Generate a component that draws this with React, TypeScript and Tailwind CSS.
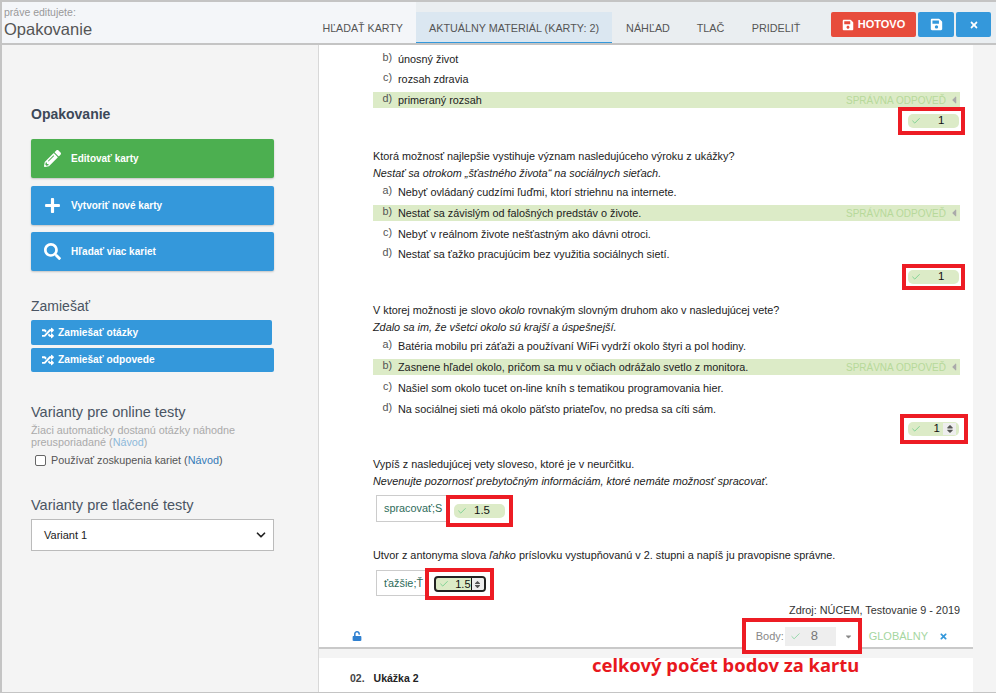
import { Check, ChevronDown } from 'lucide-react'
import { FaPencilAlt, FaPlus, FaSearch, FaRandom, FaSave, FaTimes, FaUnlock, FaCaretLeft, FaSort, FaCaretDown } from 'react-icons/fa'
import type { ReactNode } from 'react'

const TABS = ['HĽADAŤ KARTY', 'AKTUÁLNY MATERIÁL (KARTY: 2)', 'NÁHĽAD', 'TLAČ', 'PRIDELIŤ']

function Option({ letter, correct, children }: { letter: string; correct?: boolean; children: ReactNode }) {
  return (
    <div className={`flex items-center h-[16px] pl-[3px] ${correct ? 'bg-[#dcebc7]' : ''}`}>
      <span className="w-[16px] text-right text-[10.8px] text-[#555] -translate-y-[2px]">{letter}</span>
      <span className="ml-[6px] flex-1 text-[10.85px] text-[#222]">{children}</span>
      {correct && (
        <span className="flex items-center gap-[2px] text-[10px] text-[#b7d99a] whitespace-nowrap">
          SPRÁVNA ODPOVEĎ <FaCaretLeft className="text-[#aaa] text-[12px]" />
        </span>
      )}
    </div>
  )
}

// plain answer row, slightly taller than the highlighted one
function Row({ h, mt, letter, children }: { h: string; mt?: string; letter: string; children: ReactNode }) {
  return (
    <div className={`flex items-center ${h} ${mt ?? ''}`}>
      <div className="flex-1"><Option letter={letter}>{children}</Option></div>
    </div>
  )
}

function Score({ value, spin, ml }: { value: string; spin?: boolean; ml?: string }) {
  return (
    <div className="flex items-center h-[14px] w-[51px] rounded-[5px] bg-[#dcebc7] pl-[3px]">
      <Check className="w-[10px] h-[10px] text-[#6fce8c]" strokeWidth={2} />
      <span className={`text-[11.5px] text-[#111] ${spin ? 'ml-auto' : ml ?? 'ml-[17px]'}`}>{value}</span>
      {spin && (
        <span className="ml-[3px] mr-[3px] w-[13px] h-[12px] flex items-center justify-center bg-[#eee] text-[#555]">
          <FaSort className="text-[10px]" />
        </span>
      )}
    </div>
  )
}

function ScoreRow({ children, box }: { children: ReactNode; box: string }) {
  return (
    <div className="flex justify-end">
      <div className={`flex items-center justify-end border-[4px] border-[#ed1c24] ${box}`}>{children}</div>
    </div>
  )
}

function SideButton({ icon, label, className }: { icon: ReactNode; label: string; className?: string }) {
  return (
    <div className={`flex items-center h-[39px] w-[243px] rounded-[2px] shadow-[0_1px_2px_rgba(0,0,0,0.2)] text-white ${className ?? ''}`}>
      <span className="w-[40px] flex justify-center pl-[2px] text-[17px]">{icon}</span>
      <span className="text-[10px] font-bold">{label}</span>
    </div>
  )
}

function ShuffleButton({ label, w, h }: { label: string; w: string; h: string }) {
  return (
    <div className={`flex items-center ${w} ${h} rounded-[2px] bg-[#3498db] text-white pl-[11px] gap-[4px]`}>
      <FaRandom className="text-[12px]" />
      <span className="text-[10.2px] font-bold">{label}</span>
    </div>
  )
}

export default function App() {
  return (
    <div className="h-[693px] w-[996px] overflow-hidden flex flex-col bg-[#f4f4f4] border-t-[2px] border-l-[2px] border-[#c4c4c4] font-['Liberation_Sans',Arial,sans-serif]">
      {/* Top bar */}
      <div className="h-[43px] flex-shrink-0 flex bg-[#eaeef1] border-b-[2px] border-[#c4c4c4]">
        <div className="w-[414px] flex-shrink-0 bg-[#f4f6f9] flex">
          <div className="pl-[2px] pt-[3px]">
            <div className="text-[10.5px] leading-[14px] text-[#999]">práve editujete:</div>
            <div className="text-[16.5px] leading-[20px] text-[#555]">Opakovanie</div>
          </div>
          <div className="ml-auto pr-[13px] pt-[18px] text-[10.7px] text-[#555]">{TABS[0]}</div>
        </div>
        <div className="flex h-[41px] flex-1">
          <div className="mt-[10px] pt-[2px] h-[31px] w-[196px] flex items-center justify-center text-[10.8px] text-[#555] bg-[#dbe7f1] border-b-[1px] border-[#3498db]">
            {TABS[1]}
          </div>
          <div className="w-[72px] text-center pt-[18px] text-[10.8px] text-[#555]">{TABS[2]}</div>
          <div className="w-[53px] text-center pt-[18px] text-[10.8px] text-[#555]">{TABS[3]}</div>
          <div className="w-[78px] text-center pt-[18px] text-[10.8px] text-[#555]">{TABS[4]}</div>
          <div className="ml-[16px] mt-[10px] flex gap-[2px]">
            <div className="w-[85px] h-[25px] rounded-[2px] bg-[#e74c3c] text-white flex items-center justify-center gap-[4px]">
              <FaSave className="text-[12px]" />
              <span className="text-[11px] font-bold">HOTOVO</span>
            </div>
            <div className="w-[36px] h-[25px] rounded-[2px] bg-[#3498db] text-white flex items-center justify-center">
              <FaSave className="text-[13px]" />
            </div>
            <div className="w-[35px] h-[25px] rounded-[2px] bg-[#3498db] text-white flex items-center justify-center">
              <FaTimes className="text-[10px]" />
            </div>
          </div>
        </div>
      </div>

      <div className="flex flex-1 min-h-0">
        {/* Left panel */}
        <div className="w-[317px] flex-shrink-0 pl-[29px] pt-[61px] border-r-[1px] border-[#d8d8d8]">
          <div className="text-[14px] font-bold leading-[16px] text-[#3c4858]">Opakovanie</div>
          <SideButton className="mt-[17px] bg-[#4caf50]" icon={<FaPencilAlt />} label="Editovať karty" />
          <SideButton className="mt-[8px] bg-[#3498db]" icon={<FaPlus />} label="Vytvoriť nové karty" />
          <SideButton className="mt-[7px] bg-[#3498db]" icon={<FaSearch />} label="Hľadať viac kariet" />
          <div className="mt-[26px] text-[14px] leading-[18px] text-[#4a5563]">Zamiešať</div>
          <ShuffleButton label="Zamiešať otázky" w="w-[241px]" h="h-[25px] mt-[5px]" />
          <ShuffleButton label="Zamiešať odpovede" w="w-[243px]" h="h-[24px] mt-[3px]" />
          <div className="mt-[31px] text-[14.5px] leading-[18px] text-[#4a5563]">Varianty pre online testy</div>
          <div className="mt-[3px] text-[10.8px] leading-[12px] text-[#aaa] w-[230px]">
            Žiaci automaticky dostanú otázky náhodne preusporiadané (<span className="text-[#8db9da]">Návod</span>)
          </div>
          <label className="mt-[5px] flex items-center text-[10.8px] leading-[14px] text-[#555]">
            <input type="checkbox" className="ml-[4px] mr-[5px] w-[11px] h-[11px] rounded-[2px] border border-[#666] appearance-none bg-white" />
            <span>Používať zoskupenia kariet (<span className="text-[#337ab7]">Návod</span>)</span>
          </label>
          <div className="mt-[29px] text-[14.5px] leading-[18px] text-[#4a5563]">Varianty pre tlačené testy</div>
          <div className="mt-[5px] flex items-center justify-between w-[243px] h-[32px] bg-white border border-[#bbb] pl-[12px] pr-[5px] text-[11px] text-[#222]">
            Variant 1
            <ChevronDown className="w-[14px] h-[14px] text-[#222]" strokeWidth={3} />
          </div>
        </div>

        {/* Cards column */}
        <div className="w-[654px] flex-shrink-0 flex flex-col">
          <div className="h-[604px] flex-shrink-0 bg-white border-b-[2px] border-[#c9c9c9] pl-[54px] pr-[13px] pt-[4px]">
            <Row h="h-[20px]" letter="b)">únosný život</Row>
            <Row h="h-[20px]" letter="c)">rozsah zdravia</Row>
            <div className="mt-[3px]"><Option letter="d)" correct>primeraný rozsah</Option></div>
            <ScoreRow box="-mt-[1px] -mr-[5px] w-[67px] h-[28px] pr-[2px]"><Score value="1" /></ScoreRow>

            <div className="mt-[13px] text-[10.85px] leading-[17px] text-[#222]">
              Ktorá možnosť najlepšie vystihuje význam nasledujúceho výroku z ukážky?
              <br />
              <i>Nestať sa otrokom „šťastného života“ na sociálnych sieťach.</i>
            </div>
            <Row h="h-[21px]" letter="a)">Nebyť ovládaný cudzími ľuďmi, ktorí striehnu na internete.</Row>
            <div className="mt-[2px]"><Option letter="b)" correct>Nestať sa závislým od falošných predstáv o živote.</Option></div>
            <Row h="h-[21px]" mt="mt-[3px]" letter="c)">Nebyť v reálnom živote nešťastným ako dávni otroci.</Row>
            <Row h="h-[19px]" letter="d)">Nestať sa ťažko pracujúcim bez využitia sociálnych sietí.</Row>
            <ScoreRow box="-mr-[5px] w-[63px] h-[26px] pr-[2px]"><Score value="1" /></ScoreRow>

            <div className="mt-[12px] text-[10.85px] leading-[17px] text-[#222]">
              V ktorej možnosti je slovo <i>okolo</i> rovnakým slovným druhom ako v nasledujúcej vete?
              <br />
              <i>Zdalo sa im, že všetci okolo sú krajší a úspešnejší.</i>
            </div>
            <Row h="h-[21px]" letter="a)">Batéria mobilu pri záťaži a používaní WiFi vydrží okolo štyri a pol hodiny.</Row>
            <div className="mt-[2px]"><Option letter="b)" correct>Zasnene hľadel okolo, pričom sa mu v očiach odrážalo svetlo z monitora.</Option></div>
            <Row h="h-[21px]" mt="mt-[3px]" letter="c)">Našiel som okolo tucet on-line kníh s tematikou programovania hier.</Row>
            <Row h="h-[20px]" letter="d)">Na sociálnej sieti má okolo päťsto priateľov, no predsa sa cíti sám.</Row>
            <ScoreRow box="-mt-[5px] -mr-[8px] w-[68px] h-[30px] pr-[5px]"><Score value="1" spin /></ScoreRow>

            <div className="mt-[12px] text-[10.85px] leading-[17px] text-[#222]">
              Vypíš z nasledujúcej vety sloveso, ktoré je v neurčitku.
              <br />
              <i>Nevenujte pozornosť prebytočným informáciám, ktoré nemáte možnosť spracovať.</i>
            </div>
            <div className="mt-[5px] ml-[3px] flex items-start">
              <div className="w-[71px] h-[27px] border border-[#ccc] flex items-center pl-[7px] text-[10.85px] text-[#2e6b5a] whitespace-nowrap">spracovať;S</div>
              <div className="-ml-[1px] w-[67px] h-[32px] border-[4px] border-[#ed1c24] bg-white flex items-center justify-center"><Score value="1.5" ml="ml-[7px]" /></div>
            </div>

            <div className="mt-[20px] text-[10.85px] leading-[17px] text-[#222]">
              Utvor z antonyma slova <i>ľahko</i> príslovku vystupňovanú v 2. stupni a napíš ju pravopisne správne.
            </div>
            <div className="mt-[4px] ml-[3px] flex items-start">
              <div className="mt-[2px] w-[50px] h-[26px] border border-[#ccc] flex items-center pl-[7px] text-[10.85px] text-[#2e6b5a] whitespace-nowrap">ťažšie;Ť</div>
              <div className="-ml-[1px] w-[69px] h-[32px] border-[4px] border-[#ed1c24] bg-white flex items-center justify-center">
                <div className="w-[52px] h-[16px] rounded-[4px] border-[2px] border-[#222] bg-[#dcebc7] flex items-center pl-[3px]">
                  <Check className="w-[10px] h-[10px] text-[#6fce8c]" strokeWidth={2} />
                  <span className="ml-auto text-[11px] text-[#111] border-r border-[#111] leading-[12px]">1.5</span>
                  <span className="w-[12px] h-[12px] flex items-center justify-center bg-[#eee] text-[#555] rounded-r-[2px]"><FaSort className="text-[9px]" /></span>
                </div>
              </div>
            </div>

            <div className="mt-[3px] text-right text-[10.85px] leading-[14px] text-[#333]">Zdroj: NÚCEM, Testovanie 9 - 2019</div>

            <div className="mt-[1px] flex items-start">
              <FaUnlock className="mt-[13px] ml-[-21px] text-[10px] text-[#2f80d0]" />
              <div className="ml-auto flex items-center">
                <div className="relative z-10 w-[120px] h-[36px] border-[4px] border-[#ed1c24] flex items-center pl-[10px] bg-white">
                  <span className="text-[11px] text-[#888]">Body:</span>
                  <span className="ml-[1px] w-[51px] h-[19px] bg-[#eee] flex items-center pl-[5px]">
                    <Check className="w-[11px] h-[11px] text-[#6fce8c]" strokeWidth={1.5} />
                    <span className="ml-[10px] text-[13px] text-[#777]">8</span>
                  </span>
                  <FaCaretDown className="ml-[8px] text-[9px] text-[#888]" />
                </div>
                <span className="ml-[7px] text-[11px] text-[#a5d6a0]">GLOBÁLNY</span>
                <FaTimes className="ml-[11px] mr-[12px] text-[9px] text-[#3498db]" />
              </div>
            </div>
          </div>

          <div className="mt-[9px] flex-1 bg-white pl-[31px] relative">
            <div className="absolute left-[273px] -top-[3px] font-['Noto_Sans',sans-serif] text-[18.4px] font-bold leading-[20px] text-[#e8181e] whitespace-nowrap">celkový počet bodov za kartu</div>
            <div className="pt-[13px] flex text-[10.5px] font-bold text-[#222]">
              <span className="text-[#444]">02.</span>
              <span className="ml-[9px]">Ukážka 2</span>
            </div>
          </div>
        </div>
      </div>
      <div className="h-[1px] flex-shrink-0 bg-[#c4c4c4]" />
    </div>
  )
}
